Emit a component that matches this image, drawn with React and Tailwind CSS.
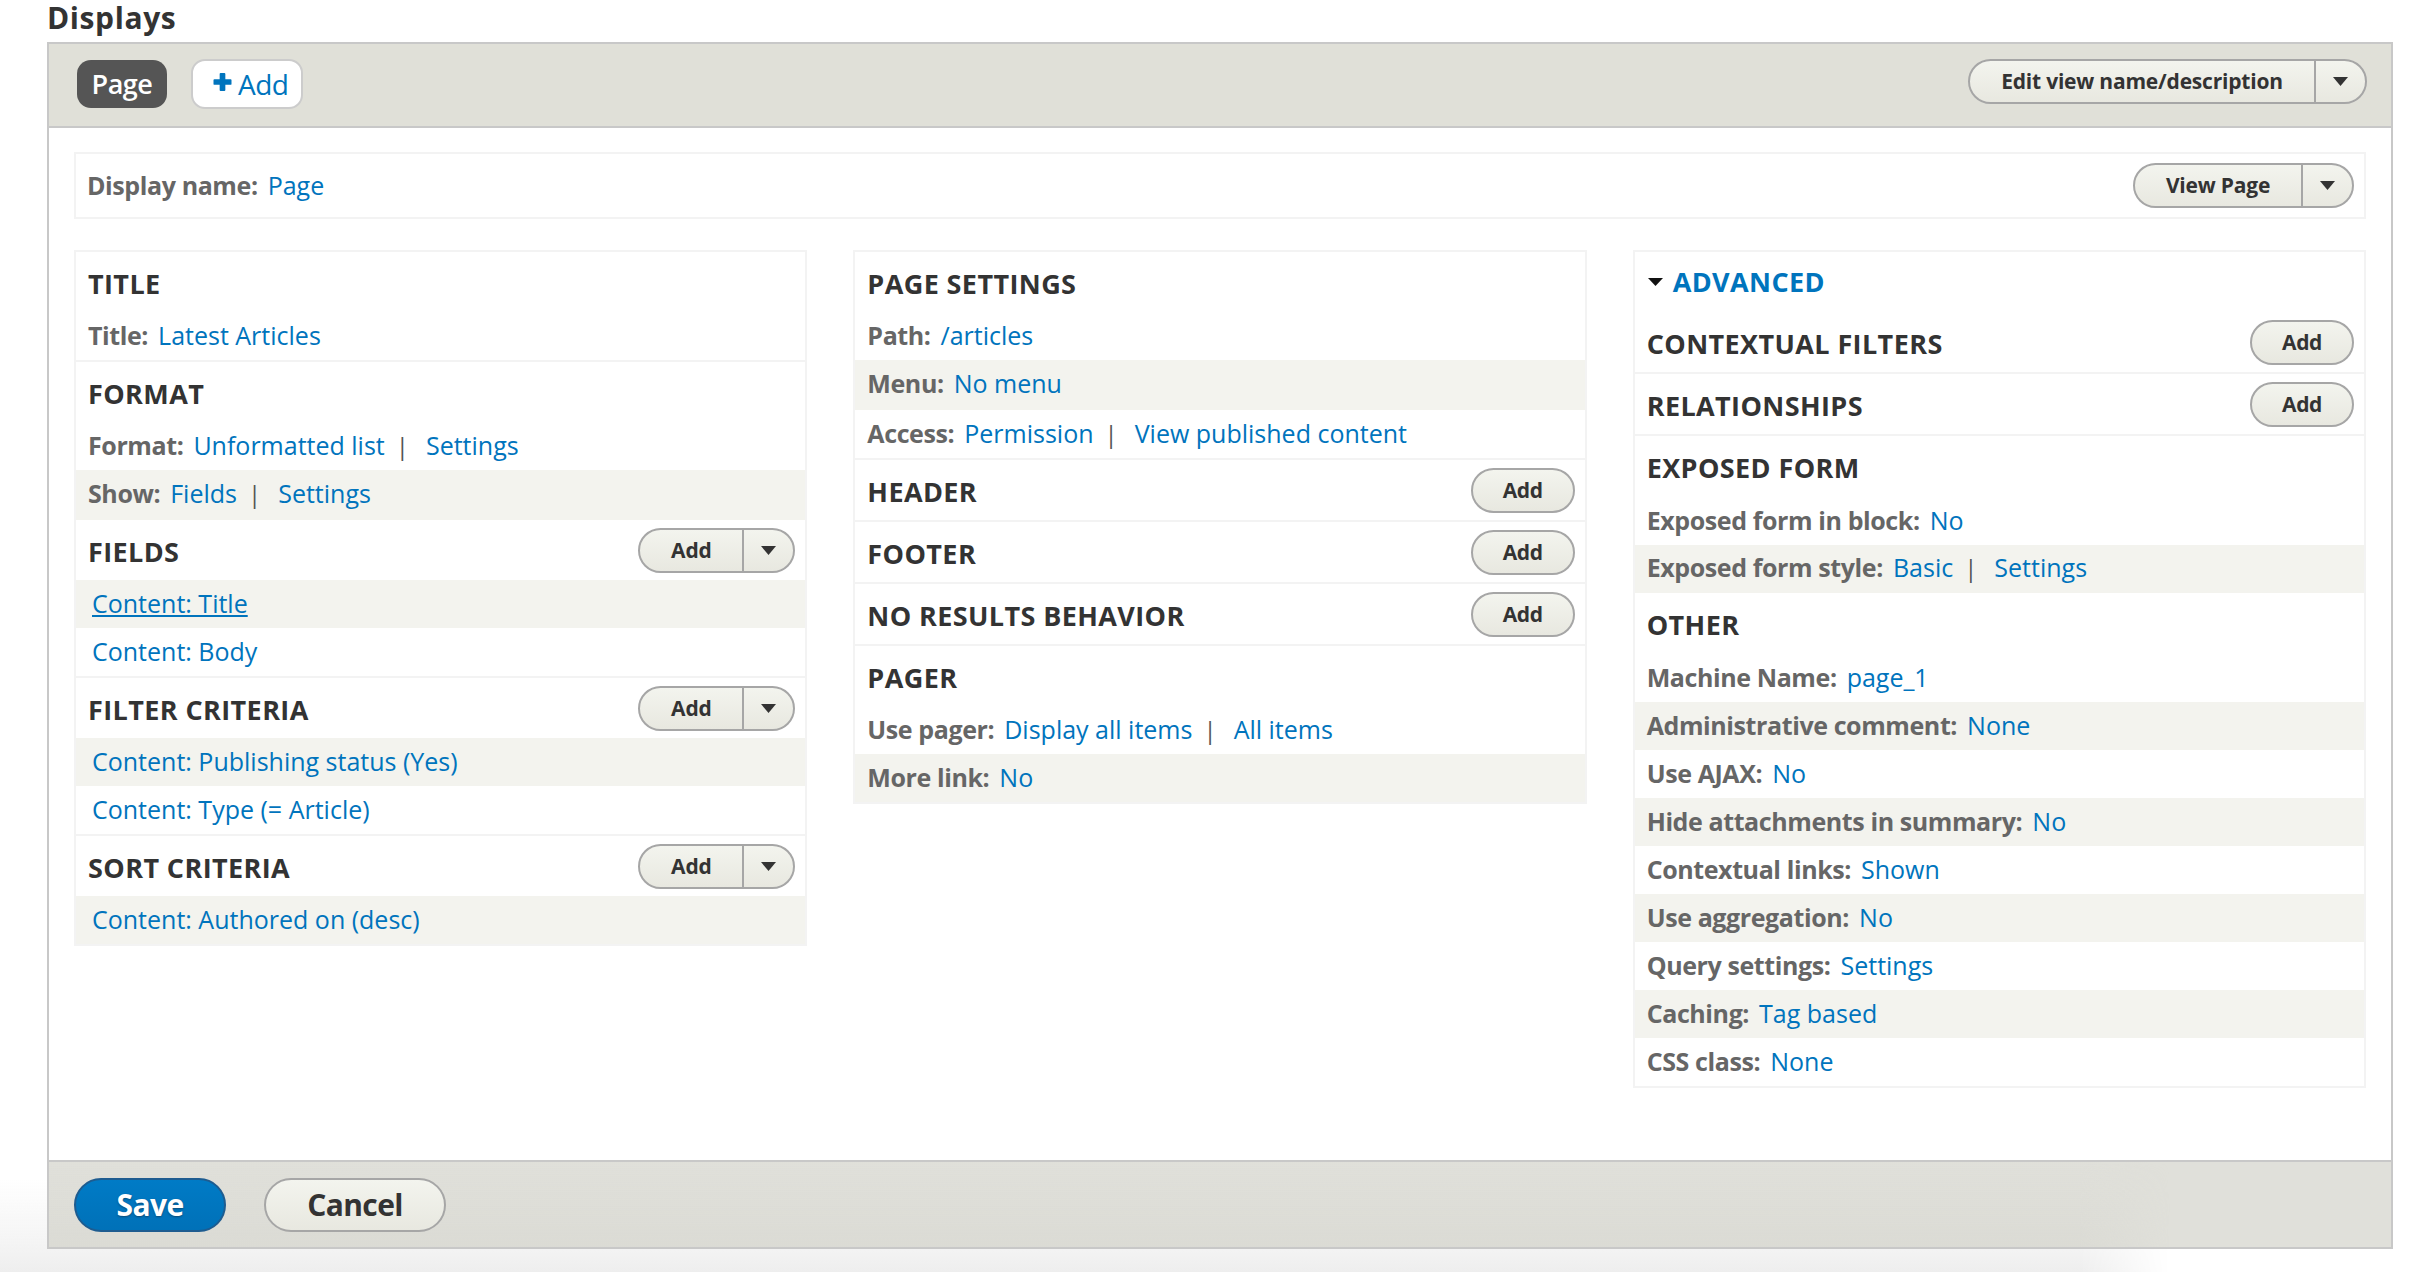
import React from "react";

const font = "font-['Open_Sans',sans-serif]";
const label = "font-bold text-[#666] text-[25px] tracking-[-0.4px]";
const link = "text-[#0074bd] text-[25px]";
const heading = "font-bold text-[#333] text-[27px] tracking-[0.4px]";

function Caret({ size = "w-[15px] h-[9px]", color = "#333" }) {
  return (
    <svg viewBox="0 0 10 6" className={size} preserveAspectRatio="none">
      <path d="M0 0h10L5 6z" fill={color} />
    </svg>
  );
}

function Pill({ children, className = "" }) {
  return (
    <div className={`flex border-2 border-[#a6a6a6] rounded-full bg-gradient-to-b from-[#f3f4ee] to-[#e8e8e0] overflow-hidden ${className}`}>
      {children}
    </div>
  );
}

function SplitButton({ text, textW, caretW = "w-[50px]" }) {
  return (
    <Pill className="h-[45px]">
      <span className={`${textW} pt-[1px] flex items-center justify-center font-bold text-[#333] tracking-[-0.2px] text-[21px]`}>{text}</span>
      <span className={`${caretW} flex items-center justify-center border-l-2 border-[#a6a6a6]`}>
        <Caret />
      </span>
    </Pill>
  );
}

function AddButton() {
  return (
    <Pill className="h-[45px] w-[104px] items-center justify-center">
      <span className="pt-[1px] font-bold text-[#333] text-[21px] tracking-[-0.4px]">Add</span>
    </Pill>
  );
}

function Row({ shaded, h = "h-[48px]", pad = "", indent, children }) {
  return (
    <div className={`${h} ${pad} ${indent ? "pl-[16px]" : "pl-[12px]"} flex items-center whitespace-nowrap ${shaded ? "bg-[#f3f3ee]" : ""}`}>
      {children}
    </div>
  );
}

function Field({ name, values }) {
  return (
    <>
      <span className={`${label} mr-[10px]`}>{name}:</span>
      {values.map((v, i) => (
        <React.Fragment key={v}>
          {i > 0 && <span className="text-[#555] text-[24px] ml-[11px] mr-[17px]">|</span>}
          <a className={link}>{v}</a>
        </React.Fragment>
      ))}
    </>
  );
}

function SectionHead({ title, action }) {
  return (
    <div className="h-[60px] pl-[12px] pr-[10px] flex items-center justify-between">
      <h3 className={`${heading} mt-[5px]`}>{title}</h3>
      {action}
    </div>
  );
}

const Heading = ({ children }) => (
  <div className="h-[64px] pl-[12px] flex items-center">
    <h3 className={heading}>{children}</h3>
  </div>
);

const Divider = () => <div className="h-[2px] bg-[#f3f3f3]" />;
const Column = ({ children }) => <div className="border-2 border-[#f3f3f3]">{children}</div>;

const addSplit = <SplitButton text="Add" textW="w-[102px]" caretW="w-[51px]" />;

export default function App() {
  return (
    <div className={`relative w-[2420px] h-[1272px] bg-white ${font}`}>
      {/* window shadow along the bottom */}
      <div className="absolute left-0 bottom-0 w-[2170px] h-[92px] bg-[linear-gradient(to_bottom,#f3f3f300_0,#f3f3f3_70px,#eeeeee_92px)] [mask-image:linear-gradient(to_left,transparent,black_90px)]" />

      <div className="relative h-[42px] pl-[47px] flex items-start">
        <h2 className="font-bold text-[#333] text-[30px] tracking-[0.6px] leading-[35px]">Displays</h2>
      </div>

      <div className="relative ml-[47px] w-[2346px] h-[1207px] border-2 border-[#c8c8c8] flex flex-col bg-white">
        <div className="h-[84px] shrink-0 bg-[#e0e0d8] border-b-2 border-[#c8c8c8] pl-[28px] pr-[23px] flex items-center justify-between">
          <div className="flex items-center gap-[24px] pb-[2px]">
            <span className="w-[90px] h-[48px] rounded-[14px] bg-[#555] text-white text-[27px] font-semibold tracking-[-0.5px] flex items-center justify-center">Page</span>
            <span className="w-[112px] h-[50px] rounded-[14px] bg-white border-2 border-[#ccc] text-[#0074bd] text-[28px] flex items-center pl-[20px] gap-[6px] tracking-[-0.5px]">
              <svg viewBox="0 0 19 19" className="w-[19px] h-[18px] -mt-[4px]">
                <path d="M6.5 1q0-1 1-1h4q1 0 1 1v5.500h5.500q1 0 1 1v4q0 1-1 1h-5.500v5.500q0 1-1 1h-4q-1 0-1-1v-5.500h-5.500q-1 0-1-1v-4q0-1 1-1h5.500z" fill="#0074bd" />
              </svg>
              Add
            </span>
          </div>
          <div className="pb-[8px] pr-[1px]">
            <SplitButton text="Edit view name/description" textW="w-[344px]" caretW="w-[51px]" />
          </div>
        </div>

        <div className="flex-1 pt-[24px] px-[25px]">
          <div className="h-[67px] border-2 border-[#f3f3f3] pl-[11px] pr-[10px] flex items-center justify-between">
            <div className="flex items-center"><Field name="Display name" values={["Page"]} /></div>
            <SplitButton text="View Page" textW="w-[166px]" caretW="w-[51px]" />
          </div>

          <div className="mt-[31px] grid grid-cols-3 gap-[46px] items-start">
            <Column>
              <Heading>TITLE</Heading>
              <Row h="h-[44px]" pad="pb-[4px]"><Field name="Title" values={["Latest Articles"]} /></Row>
              <Divider />
              <Heading>FORMAT</Heading>
              <Row h="h-[44px]" pad="pb-[4px]"><Field name="Format" values={["Unformatted list", "Settings"]} /></Row>
              <Row shaded h="h-[50px]" pad="pb-[2px]"><Field name="Show" values={["Fields", "Settings"]} /></Row>
              <SectionHead title="FIELDS" action={addSplit} />
              <Row shaded indent><a className={`${link} underline`}>Content: Title</a></Row>
              <Row indent><a className={link}>Content: Body</a></Row>
              <Divider />
              <SectionHead title="FILTER CRITERIA" action={addSplit} />
              <Row shaded indent><a className={link}>Content: Publishing status (Yes)</a></Row>
              <Row indent><a className={link}>Content: Type (= Article)</a></Row>
              <Divider />
              <SectionHead title="SORT CRITERIA" action={addSplit} />
              <Row shaded indent><a className={link}>Content: Authored on (desc)</a></Row>
            </Column>

            <Column>
              <Heading>PAGE SETTINGS</Heading>
              <Row h="h-[44px]" pad="pb-[4px]"><Field name="Path" values={["/articles"]} /></Row>
              <Row shaded h="h-[50px]" pad="pb-[2px]"><Field name="Menu" values={["No menu"]} /></Row>
              <Row><Field name="Access" values={["Permission", "View published content"]} /></Row>
              <Divider />
              <SectionHead title="HEADER" action={<AddButton />} />
              <Divider />
              <SectionHead title="FOOTER" action={<AddButton />} />
              <Divider />
              <SectionHead title="NO RESULTS BEHAVIOR" action={<AddButton />} />
              <Divider />
              <Heading>PAGER</Heading>
              <Row h="h-[44px]" pad="pb-[4px]"><Field name="Use pager" values={["Display all items", "All items"]} /></Row>
              <Row shaded><Field name="More link" values={["No"]} /></Row>
            </Column>

            <Column>
              <div className="h-[60px] pl-[13px] flex items-center gap-[10px]">
                <Caret size="w-[15px] h-[8px]" color="#111" />
                <a className="text-[#0074bd] text-[27px] font-bold tracking-[0.4px]">ADVANCED</a>
              </div>
              <SectionHead title="CONTEXTUAL FILTERS" action={<AddButton />} />
              <Divider />
              <SectionHead title="RELATIONSHIPS" action={<AddButton />} />
              <Divider />
              <Heading>EXPOSED FORM</Heading>
              <Row h="h-[45px]" pad="pb-[4px]"><Field name="Exposed form in block" values={["No"]} /></Row>
              <Row shaded pad="pb-[2px]"><Field name="Exposed form style" values={["Basic", "Settings"]} /></Row>
              <Heading>OTHER</Heading>
              <Row h="h-[45px]" pad="pb-[3px]"><Field name="Machine Name" values={["page_1"]} /></Row>
              <Row shaded><Field name="Administrative comment" values={["None"]} /></Row>
              <Row><Field name="Use AJAX" values={["No"]} /></Row>
              <Row shaded><Field name="Hide attachments in summary" values={["No"]} /></Row>
              <Row><Field name="Contextual links" values={["Shown"]} /></Row>
              <Row shaded><Field name="Use aggregation" values={["No"]} /></Row>
              <Row><Field name="Query settings" values={["Settings"]} /></Row>
              <Row shaded><Field name="Caching" values={["Tag based"]} /></Row>
              <Row><Field name="CSS class" values={["None"]} /></Row>
            </Column>
          </div>
        </div>

        <div className="relative h-[87px] shrink-0 bg-[#e0e0da] border-t-2 border-[#c8c8c8] pl-[25px] flex items-center gap-[38px]">
          <div className="absolute left-0 top-0 bottom-0 w-[2121px] bg-gradient-to-b from-[#dbdbd500] to-[#dbdbd5] [mask-image:linear-gradient(to_left,transparent,black_90px)]" />
          <button className="relative w-[152px] h-[54px] rounded-full border-2 border-[#1e5c90] bg-gradient-to-b from-[#007bc6] to-[#0071b8] text-white font-bold text-[30px] tracking-[-0.6px] [text-shadow:0_1px_2px_#0b4a75]">Save</button>
          <button className="relative w-[182px] h-[54px] rounded-full border-2 border-[#a6a6a6] bg-gradient-to-b from-[#f3f4ee] to-[#e8e8e0] text-[#333] font-bold text-[30px] tracking-[-0.6px]">Cancel</button>
        </div>
      </div>
    </div>
  );
}
